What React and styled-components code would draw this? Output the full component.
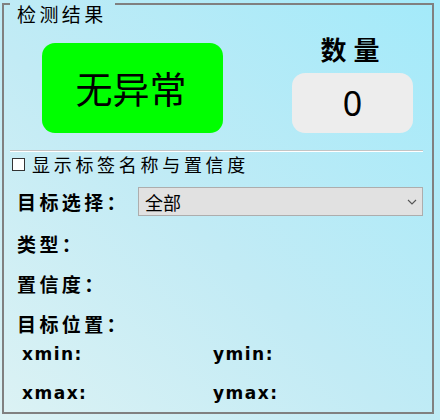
import React from "react";
import styled, { createGlobalStyle } from "styled-components";

const Global = createGlobalStyle`
  html, body { margin: 0; padding: 0; }
  body {
    width: 440px;
    height: 420px;
    overflow: hidden;
    background: linear-gradient(to top right, #dcf2f4 0%, #c2ebf5 45%, #a3eafa 100%);
    font-family: "Noto Sans CJK SC", "Noto Sans", sans-serif;
    color: #000;
  }
`;

const Frame = styled.section`
  box-sizing: border-box;
  margin: 3px 0 0 2px;
  width: 432px;
  height: 411px;
  border: 2px solid #808080;
  border-top: none;
  display: flex;
  flex-direction: column;
`;

const Header = styled.div`
  display: flex;
  align-items: flex-start;
  height: 22px;
`;

const Edge = styled.div`
  border-top: 2px solid #808080;
  width: ${(p) => (p.$grow ? "auto" : "6px")};
  flex: ${(p) => (p.$grow ? "1" : "none")};
`;

const Title = styled.div`
  padding: 0 8px 0 7px;
  font-size: 19px;
  line-height: 22px;
  letter-spacing: 3.4px;
`;

const Top = styled.div`
  display: flex;
  align-items: flex-end;
  height: 108px;
  padding-left: 38px;
`;

const Status = styled.div`
  width: 181px;
  height: 90px;
  border-radius: 13px;
  background: #00ff00;
  display: flex;
  align-items: center;
  justify-content: center;
  font-size: 37px;
  padding-right: 3px;
  box-sizing: border-box;
`;

const CountCol = styled.div`
  margin-left: 69px;
  width: 121px;
  display: flex;
  flex-direction: column;
  align-items: center;
`;

const CountTitle = styled.div`
  font-size: 26px;
  line-height: 32px;
  font-weight: 700;
  letter-spacing: 7px;
  margin: 0 0 8px 0;
  padding-left: 2px;
`;

const CountBox = styled.div`
  width: 121px;
  height: 60px;
  border-radius: 13px;
  background: #ededed;
  display: flex;
  align-items: center;
  justify-content: center;
  font-family: "Noto Sans", sans-serif;
  font-size: 34px;
`;

const Separator = styled.div`
  margin: 17px 9px 0 6px;
  border-top: 1px solid #c4c4c4;
  border-bottom: 1px solid #ffffff;
`;

const Body = styled.div`
  display: flex;
  flex-direction: column;
  padding-left: 8px;
`;

const CheckRow = styled.label`
  display: flex;
  align-items: center;
  height: 24px;
`;

const Check = styled.input.attrs({ type: "checkbox" })`
  appearance: none;
  -webkit-appearance: none;
  width: 13px;
  height: 13px;
  margin: 0;
  box-sizing: border-box;
  border: 1px solid #333;
  background: #fff;
`;

const CheckText = styled.span`
  margin-left: 7px;
  font-size: 18px;
  letter-spacing: 3.7px;
`;

const Row = styled.div`
  display: flex;
  align-items: center;
  height: ${(p) => p.$h || 26}px;
  margin-top: ${(p) => p.$mt || 14}px;
  padding-left: 5px;
`;

const Label = styled.div`
  font-size: 19px;
  font-weight: 700;
  letter-spacing: 3.4px;
  white-space: nowrap;
  width: ${(p) => (p.$w ? p.$w + "px" : "auto")};
  flex: none;
`;

const Combo = styled.div`
  flex: 1;
  height: 29px;
  margin-right: 9px;
  box-sizing: border-box;
  border: 1px solid #adadad;
  background: #e1e1e1;
  display: flex;
  align-items: center;
  justify-content: space-between;
  padding: 0 5px 0 6px;
  font-size: 18px;
`;

const Coords = styled.div`
  display: grid;
  grid-template-columns: 191px 1fr;
  grid-auto-rows: 26px;
  row-gap: 13px;
  margin-top: 5px;
  padding-left: 10px;
`;

const Coord = styled.div`
  display: flex;
  align-items: center;
  font-family: "DejaVu Sans", sans-serif;
  font-weight: 700;
  font-size: 17px;
  letter-spacing: 1.5px;
`;

const Chevron = () => (
  <svg width="10" height="6" viewBox="0 0 10 6">
    <path d="M1 1 L5 5 L9 1" fill="none" stroke="#555" strokeWidth="1.1" />
  </svg>
);

export default function App() {
  return (
    <>
      <Global />
      <Frame>
        <Header>
          <Edge />
          <Title>检测结果</Title>
          <Edge $grow />
        </Header>
        <Top>
          <Status>无异常</Status>
          <CountCol>
            <CountTitle>数量</CountTitle>
            <CountBox>0</CountBox>
          </CountCol>
        </Top>
        <Separator />
        <Body>
          <CheckRow>
            <Check />
            <CheckText>显示标签名称与置信度</CheckText>
          </CheckRow>
          <Row $h={29} $mt={11}>
            <Label $w={121}>目标选择：</Label>
            <Combo>
              <span>全部</span>
              <Chevron />
            </Combo>
          </Row>
          <Row>
            <Label>类型：</Label>
          </Row>
          <Row>
            <Label>置信度：</Label>
          </Row>
          <Row>
            <Label>目标位置：</Label>
          </Row>
          <Coords>
            <Coord>xmin:</Coord>
            <Coord>ymin:</Coord>
            <Coord>xmax:</Coord>
            <Coord>ymax:</Coord>
          </Coords>
        </Body>
      </Frame>
    </>
  );
}
